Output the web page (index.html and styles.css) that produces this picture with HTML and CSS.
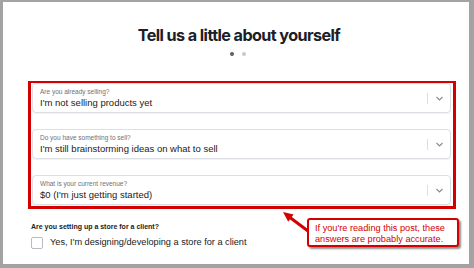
FILE: index.html
```html
<!DOCTYPE html>
<html>
<head>
  <title>Tell us a little about yourself</title>
  <link rel="stylesheet" href="styles.css">
</head>
<body>
  <div class="frame">
    <h1 class="title">Tell us a little about yourself</h1>
    <div class="dots">
      <span class="dot dot-on"></span>
      <span class="dot"></span>
    </div>
    <div class="highlight">
      <div class="select">
        <div class="select-text">
          <span class="select-label">Are you already selling?</span>
          <span class="select-value">I'm not selling products yet</span>
        </div>
        <span class="select-arrow"><svg width="7" height="5" viewBox="0 0 7 5"><path d="M0.5 1 L3.5 4 L6.5 1" fill="none" stroke="#8a8a8a" stroke-width="1.1"/></svg></span>
      </div>
      <div class="select">
        <div class="select-text">
          <span class="select-label">Do you have something to sell?</span>
          <span class="select-value">I'm still brainstorming ideas on what to sell</span>
        </div>
        <span class="select-arrow"><svg width="7" height="5" viewBox="0 0 7 5"><path d="M0.5 1 L3.5 4 L6.5 1" fill="none" stroke="#8a8a8a" stroke-width="1.1"/></svg></span>
      </div>
      <div class="select">
        <div class="select-text">
          <span class="select-label">What is your current revenue?</span>
          <span class="select-value">$0 (I'm just getting started)</span>
        </div>
        <span class="select-arrow"><svg width="7" height="5" viewBox="0 0 7 5"><path d="M0.5 1 L3.5 4 L6.5 1" fill="none" stroke="#8a8a8a" stroke-width="1.1"/></svg></span>
      </div>
    </div>
    <div class="client">
      <p class="client-q">Are you setting up a store for a client?</p>
      <label class="check"><span class="check-box"></span>Yes, I'm designing/developing a store for a client</label>
    </div>

    <!-- annotation on top of the screenshot -->
    <svg class="arrow" width="32" height="28" viewBox="0 0 32 28">
      <line x1="10" y1="9.5" x2="28" y2="23" stroke="#d40000" stroke-width="3"/>
      <polygon points="3,4 13.6,6.6 8.2,13.8" fill="#d40000"/>
    </svg>
    <div class="callout">If you're reading this post, these answers are probably accurate.</div>
  </div>
</body>
</html>
```

FILE: styles.css
```css
body {
  margin: 0;
  padding: 2px 5px 4px 3px;
  background-color: #a3a3a3;
  font-family: "Liberation Sans", Arial, sans-serif;
  color: #212b36;
}
.frame {
  position: relative;
  height: 262px;
  background-color: #fff;
  overflow: hidden;
}
.title {
  margin: 0;
  padding: 22px 0 0 6px;
  font-family: Inter, "Noto Sans", sans-serif;
  font-size: 16.2px;
  line-height: 22px;
  font-weight: 700;
  text-align: center;
  letter-spacing: -0.6px;
  color: #1c2026;
}
.dots {
  display: flex;
  justify-content: center;
  gap: 8px;
  margin-top: 6px;
  padding-left: 3px;
}
.dot {
  width: 4px;
  height: 4px;
  border-radius: 50%;
  background-color: #c9c9c9;
}
.dot-on {
  background-color: #5c5f62;
}
.highlight {
  display: flex;
  flex-direction: column;
  gap: 16px;
  width: 428px;
  box-sizing: border-box;
  margin: 25px 0 0 25px;
  padding: 0 2px 1px 1px;
  border: 3px solid #d40000;
  border-top-width: 2px;
}
.select {
  display: flex;
  align-items: center;
  height: 30px;
  box-sizing: border-box;
  border: 1px solid #dcdfe3;
  border-radius: 4px;
  box-shadow: 0 1px 1px rgba(0, 0, 0, 0.06);
}
.select-text {
  flex: 1;
  display: flex;
  flex-direction: column;
  padding: 4px 0 0 7px;
  align-self: flex-start;
}
.select-label {
  font-size: 6.5px;
  line-height: 8px;
  color: #6d7175;
}
.select-value {
  font-size: 9.5px;
  line-height: 13px;
  color: #202223;
}
.select-arrow {
  display: flex;
  align-items: center;
  justify-content: center;
  width: 22px;
  height: 11px;
  border-left: 1px solid #dcdfe3;
}
.client {
  margin: 13px 0 0 28px;
}
.client-q {
  margin: 0;
  font-size: 7px;
  line-height: 10px;
  font-weight: 700;
  color: #202223;
}
.check {
  display: flex;
  align-items: center;
  gap: 7px;
  margin-top: 4px;
  font-size: 9.2px;
  line-height: 13px;
  color: #202223;
}
.check-box {
  width: 10px;
  height: 10px;
  border: 1px solid #b8bcc0;
  border-radius: 2px;
}
.arrow {
  position: absolute;
  left: 277px;
  top: 206px;
}
.callout {
  position: absolute;
  left: 304px;
  top: 216px;
  width: 152px;
  height: 29px;
  box-sizing: border-box;
  padding: 3px 5px 0 6px;
  border: 2px solid #d40000;
  border-radius: 3px;
  background-color: #fff;
  box-shadow: 2px 2px 2px rgba(0, 0, 0, 0.45);
  font-size: 9.2px;
  line-height: 11px;
  color: #d40000;
}
```
